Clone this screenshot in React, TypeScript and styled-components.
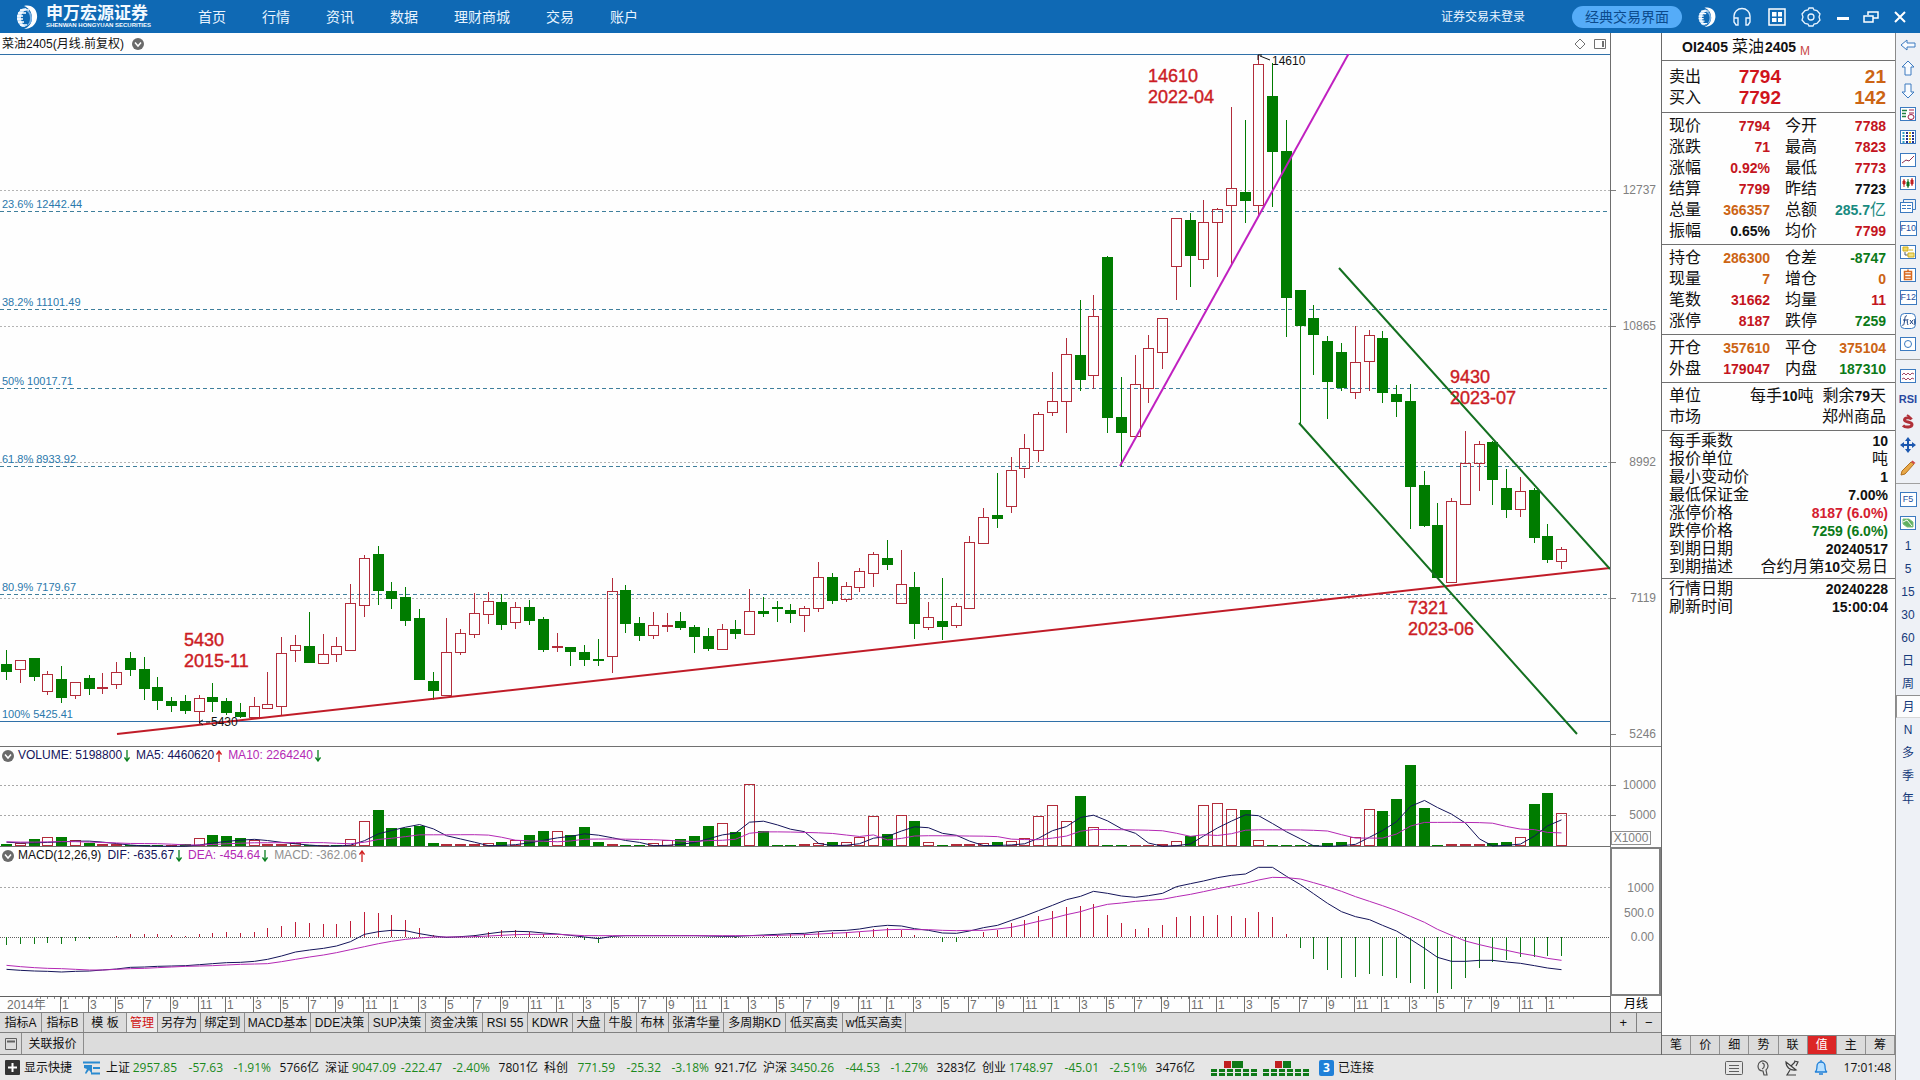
import React from "react";
import styled, { createGlobalStyle } from "styled-components";

/* ---------- tokens ---------- */
const RED = "#c41420";
const CANDLE_RED = "#b22c3a";
const GREEN = "#007c00";
const NAVY = "#14145a";
const PURPLE = "#b428b4";
const FONT = `"Liberation Sans", "Noto Sans CJK SC", sans-serif`;

const Global = createGlobalStyle`
  * { box-sizing: border-box; }
  html, body { margin: 0; padding: 0; }
  body { font-family: ${FONT}; font-size: 12px; color: #111; background: #fefefe; }
  button { font: inherit; color: inherit; background: none; border: 0; padding: 0; margin: 0; cursor: pointer; }
  svg { display: block; }
`;

/* ---------- data ---------- */
type Candle = [up: 0 | 1, top: number, bottom: number, high: number, low: number];
const CANDLES: Candle[] = [
  [0, 664, 671, 650, 679], [1, 660, 669, 660, 682], [0, 658, 676, 658, 680], [1, 674, 691, 671, 694],
  [0, 679, 697, 666, 702], [1, 682, 695, 682, 698], [0, 678, 688, 675, 694], [1, 687, 688, 673, 693],
  [1, 672, 684, 662, 688], [0, 658, 669, 652, 675], [0, 669, 688, 657, 699], [0, 687, 700, 677, 709],
  [0, 701, 705, 697, 711], [0, 701, 710, 695, 713], [1, 698, 711, 695, 723], [0, 697, 701, 683, 711],
  [0, 701, 712, 698, 714], [0, 712, 716, 703, 717], [1, 706, 717, 697, 717], [1, 704, 708, 672, 708],
  [1, 653, 706, 637, 714], [1, 645, 650, 635, 661], [0, 646, 662, 612, 662], [1, 654, 663, 634, 663],
  [1, 646, 654, 637, 661], [1, 603, 650, 584, 650], [1, 558, 605, 555, 616], [0, 554, 590, 546, 604],
  [0, 591, 598, 582, 608], [0, 597, 620, 587, 625], [0, 618, 679, 609, 679], [0, 681, 690, 672, 699],
  [1, 652, 695, 618, 695], [1, 633, 652, 629, 654], [1, 613, 634, 593, 637], [1, 601, 614, 592, 623],
  [0, 602, 624, 594, 629], [1, 607, 622, 602, 628], [0, 607, 620, 600, 624], [0, 619, 649, 617, 651],
  [1, 646, 647, 633, 651], [0, 647, 651, 647, 665], [0, 652, 659, 645, 665], [0, 659, 660, 639, 665],
  [1, 591, 656, 578, 672], [0, 590, 623, 585, 632], [0, 623, 635, 617, 640], [1, 625, 635, 612, 638],
  [1, 625, 626, 613, 631], [0, 621, 627, 612, 629], [0, 627, 636, 625, 652], [0, 636, 648, 628, 650],
  [1, 629, 649, 624, 649], [0, 629, 633, 620, 638], [1, 611, 634, 589, 634], [0, 611, 613, 597, 616],
  [0, 607, 608, 601, 621], [0, 610, 613, 604, 622], [1, 608, 615, 606, 631], [1, 577, 608, 562, 611],
  [0, 577, 600, 573, 603], [1, 586, 599, 582, 601], [1, 571, 587, 568, 591], [1, 554, 573, 552, 586],
  [0, 558, 564, 540, 569], [1, 584, 603, 550, 603], [0, 587, 623, 572, 638], [1, 617, 627, 602, 629],
  [0, 621, 626, 578, 639], [1, 606, 625, 603, 627], [1, 542, 608, 536, 608], [1, 517, 543, 508, 543],
  [0, 515, 518, 473, 527], [1, 470, 506, 457, 512], [1, 448, 468, 434, 477], [1, 414, 450, 412, 461],
  [1, 401, 412, 372, 415], [1, 354, 401, 338, 432], [0, 355, 379, 300, 390], [1, 316, 375, 295, 388],
  [0, 257, 417, 256, 432], [0, 417, 432, 377, 466], [1, 384, 436, 355, 436], [1, 348, 388, 335, 402],
  [1, 318, 352, 318, 368], [1, 218, 266, 218, 299], [0, 220, 255, 213, 286], [1, 222, 259, 200, 268],
  [1, 209, 222, 208, 276], [1, 188, 205, 107, 265], [0, 192, 200, 120, 222], [1, 64, 205, 55, 214],
  [0, 96, 151, 63, 206], [0, 151, 297, 120, 336], [0, 290, 325, 290, 423], [0, 318, 334, 305, 374],
  [0, 341, 381, 336, 418], [0, 352, 387, 343, 390], [1, 362, 392, 326, 398], [1, 335, 361, 330, 390],
  [0, 338, 392, 331, 402], [0, 394, 401, 385, 416], [0, 401, 486, 384, 528], [0, 485, 525, 471, 526],
  [0, 525, 577, 503, 577], [1, 501, 582, 498, 582], [1, 463, 504, 431, 504], [1, 444, 463, 441, 490],
  [0, 442, 479, 441, 504], [0, 488, 509, 469, 517], [1, 491, 509, 477, 516], [0, 490, 537, 488, 542],
  [0, 536, 559, 524, 562], [1, 549, 561, 547, 568],
];

/* bar heights; a negative number is a falling month */
const VOLUMES = [
  -4, 6, -18, 24, -25, 15, -6, 3, 3, -2, -2, -2, 2, -4, 21, -30, -27, -21, 16, 3, 3, 5, -2, 2, -2, 17, 72, -105, -51,
  -52, -57, -6, 3, 3, 3, 5, -8, 16, -30, -42, 41, -30, -55, -9, 3, -1, -1, 6, 14, -18, -28, -57, 65, -40, 182, -43, -1,
  -1, 3, 6, -8, 9, 23, 86, -33, 89, -72, 9, -2, 3, 3, 5, -9, 11, 20, 86, 119, 71, -147, 54, -1, -1, 2, 2, 4, 11, -27,
  119, 125, 107, -105, 14, -1, -1, -1, -1, -6, -9, 23, 107, -102, -138, -240, -111, -1, 3, 3, 3, -6, -9, 23, -123, -156,
  96,
];

const DIF = [
  688, 691, 693, 694, 696, 694, 693, 690, 687, 682, 681, 679, 678, 677, 674, 671, 668, 667, 664, 658, 648, 636, 630, 625,
  618, 605, 583, 575, 571, 572, 581, 588, 592, 590, 587, 581, 576, 574, 575, 579, 582, 586, 591, 596, 589, 587, 587, 587,
  587, 587, 587, 588, 589, 589, 587, 585, 583, 581, 580, 575, 572, 571, 567, 560, 556, 558, 566, 571, 579, 580, 573, 563,
  556, 541, 528, 512, 496, 479, 469, 454, 460, 468, 472, 467, 460, 440, 431, 423, 413, 406, 402, 382, 382, 409, 434, 461,
  490, 515, 530, 539, 556, 573, 598, 625, 652, 664, 664, 661, 661, 666, 670, 677, 684, 689,
];
const DEA = [
  676, 680, 683, 685, 686, 688, 690, 690, 688, 686, 685, 683, 681, 679, 678, 677, 675, 673, 672, 671, 665, 658, 651, 645,
  638, 629, 620, 611, 604, 598, 594, 591, 591, 591, 590, 588, 586, 584, 583, 583, 583, 585, 587, 587, 587, 587, 587, 587,
  587, 587, 587, 587, 587, 587, 587, 587, 586, 585, 584, 582, 580, 578, 575, 572, 569, 568, 569, 569, 571, 572, 571, 571,
  567, 562, 554, 544, 535, 524, 515, 503, 493, 489, 484, 481, 478, 470, 463, 455, 446, 438, 430, 420, 412, 413, 417, 428,
  440, 454, 470, 484, 497, 512, 529, 547, 568, 586, 603, 614, 623, 631, 640, 647, 655, 661,
];

const W = 1610;
const STEP = 13.763;
const cx = (i: number) => Math.round(6 + i * STEP) + 0.5;

const FIBS: [string, number][] = [
  ["23.6% 12442.44", 157], ["38.2% 11101.49", 255], ["50% 10017.71", 334],
  ["61.8% 8933.92", 412], ["80.9% 7179.67", 540], ["100% 5425.41", 667],
];
const PRICE_TICKS: [string, number][] = [["12737", 136], ["10865", 272], ["8992", 408], ["7119", 544], ["5246", 680]];

/* ---------- shell ---------- */
const Page = styled.div`
  height: 100vh; min-height: 700px; display: flex; flex-direction: column; overflow: hidden;
`;
const Header = styled.header`
  flex: none; height: 33px; display: flex; align-items: center; background: #0f69b4; color: #e8f4ff;
`;
const Brand = styled.div`
  width: 198px; padding-left: 16px; display: flex; align-items: center; gap: 8px;
`;
const BrandText = styled.div`
  display: flex; flex-direction: column; color: #f4faff;
  strong { font-size: 17px; line-height: 17px; font-weight: 700; white-space: nowrap; }
  small { font-size: 6px; line-height: 7px; font-weight: 700; white-space: nowrap; }
`;
const Nav = styled.nav`
  flex: 1; display: flex; gap: 36px; font-size: 14px; line-height: 20px;
  a { color: inherit; text-decoration: none; white-space: nowrap; }
`;
const LoginState = styled.span`font-size: 12px; line-height: 20px; margin-right: 47px; white-space: nowrap;`;
const ModeButton = styled.button`
  width: 110px; height: 22px; border-radius: 11px; background: #55acf8; color: #0b4a8c; font-size: 14px; line-height: 20px;
  margin-right: 14px;
`;
const HeaderIcons = styled.div`
  display: flex; align-items: center; padding-right: 10px;
  button { height: 24px; display: flex; align-items: center; justify-content: center; }
`;
const HeadBtn = styled.button<{ $w: number }>`width: ${(p) => p.$w}px;`;

const Body = styled.div`flex: 1; min-height: 0; display: flex;`;
const MainCol = styled.div`flex: 1; min-width: 0; display: flex; flex-direction: column;`;
const Work = styled.div`flex: 1; min-height: 0; display: flex;`;
const Left = styled.main`flex: 1; min-width: 0; display: flex; flex-direction: column;`;

/* ---------- chart ---------- */
const Chart = styled.section`
  flex: 1; min-height: 0; display: grid;
  grid-template-columns: minmax(0, 1fr) 51px;
  grid-template-rows: 21px minmax(0, 692fr) minmax(0, 101fr) minmax(0, 149fr) 17px;
`;
const TitleCell = styled.div`
  display: flex; align-items: center; gap: 8px; padding: 0 4px 0 2px; font-size: 12px; line-height: 20px; white-space: nowrap;
`;
const Spacer = styled.span`flex: 1;`;
const Pane = styled.div<{ $line?: string }>`
  position: relative; overflow: hidden;
  border-top: ${(p) => (p.$line ? `1px solid ${p.$line}` : "0")};
`;
const Plot = styled.svg`position: absolute; inset: 0; width: 100%; height: 100%;`;
const Axis = styled.div<{ $boxed?: boolean; $top?: boolean }>`
  position: relative; color: #808080; border-left: 1px solid #6e6e6e;
  ${(p) => p.$top && "border-top: 1px solid #808080;"}
  ${(p) => p.$boxed && "border: 2px solid #808080;"}
`;
const Tick = styled.span<{ $at: string; $bare?: boolean }>`
  position: absolute; left: 0; right: 5px; top: ${(p) => p.$at}; height: 14px; margin-top: -7px;
  font-size: 12px; line-height: 14px; text-align: right;
  &::before {
    content: ""; position: absolute; left: 0; top: 7px; width: 5px; height: ${(p) => (p.$bare ? 0 : 1)}px; background: #808080;
  }
`;
const Unit = styled.span`
  position: absolute; left: 0; bottom: 2px; width: 40px; height: 14px; border: 1px solid #909090;
  font-size: 12px; line-height: 12px; text-align: center;
`;
const FibLabel = styled.span<{ $y: number }>`
  position: absolute; left: 2px; top: calc(100% * ${(p) => p.$y} / 692); margin-top: -14px;
  font-size: 11px; line-height: 14px; color: #2a78ac;
`;
const Note = styled.div<{ $x: number; $y: number }>`
  position: absolute; left: calc(100% * ${(p) => p.$x} / ${W}); top: calc(100% * ${(p) => p.$y} / 692);
  font-size: 18px; line-height: 21px; color: #cc1c24; white-space: nowrap; -webkit-text-stroke: 0.4px #cc1c24;
`;
const Peak = styled(Note)`font-size: 12px; line-height: 14px; color: #111; -webkit-text-stroke: 0;`;
const Legend = styled.div`
  position: relative; display: flex; align-items: center; gap: 4px; height: 17px; padding-left: 2px;
  font-size: 12px; line-height: 17px; white-space: nowrap;
`;
const Metric = styled.span<{ $c: string }>`
  display: inline-flex; align-items: center; gap: 2px; color: ${(p) => p.$c}; margin-right: 2px;
`;
const Dates = styled.div`
  position: relative; border-top: 1px solid #606060; border-bottom: 1px solid #808080; overflow: hidden; color: #707070;
`;
const Month = styled.span<{ $x: number; $tick?: boolean }>`
  position: absolute; left: calc(100% * ${(p) => p.$x} / ${W}); top: 0; height: 16px; padding-left: 1px;
  border-left: ${(p) => (p.$tick ? "1px solid #707070" : "0")}; font-size: 12px; line-height: 16px; white-space: nowrap;
`;
const Period = styled.div`
  border-left: 1px solid #6e6e6e; border-bottom: 1px solid #808080; text-align: center; line-height: 16px; color: #000;
`;

/* ---------- strips under the chart ---------- */
const Strip = styled.div<{ $h: number }>`
  flex: none; height: ${(p) => p.$h}px; display: flex; background: #dcdcdc; border-bottom: 1px solid #808080;
`;
const StripTab = styled.button<{ $w: number; $hot?: boolean }>`
  width: ${(p) => p.$w}px; border-right: 1px solid #8c8c8c; font-size: 12px; line-height: 18px; white-space: nowrap;
  overflow: hidden; color: ${(p) => (p.$hot ? "#d01010" : "#111")}; background: ${(p) => (p.$hot ? "#ececec" : "none")};
  display: flex; align-items: center; justify-content: center;
`;
const Zoomers = styled.div`
  margin-left: auto; width: 51px; display: flex; border-left: 1px solid #6e6e6e;
  button { flex: 1; font-size: 13px; line-height: 18px; }
  button + button { border-left: 1px solid #808080; }
`;

/* ---------- quote panel ---------- */
const Quote = styled.aside`
  flex: none; width: 234px; border-left: 1px solid #6a6a6a; display: flex; flex-direction: column; background: #fefefe;
`;
const QuoteTitle = styled.h1`
  margin: 0; height: 27px; padding-left: 20px; display: flex; align-items: center; font-size: 16px; line-height: 24px;
  font-weight: 400; white-space: nowrap;
  b { font-size: 14px; margin-right: 4px; }
  span + b { margin-left: 1px; }
  sub { font-size: 12px; color: #c84848; line-height: 12px; padding-top: 8px; vertical-align: baseline; }
`;
const Block = styled.table<{ $big?: boolean; $row?: number }>`
  width: 100%; border-collapse: separate; border-spacing: 0; table-layout: fixed; border-top: 1px solid #707070;
  padding: ${(p) => (p.$big ? "5px" : p.$row ? "1px" : "2px")} ${(p) => (p.$row ? 7 : 9)}px
    ${(p) => (p.$big ? 4 : p.$row ? 2 : 3)}px 7px;
  th, td {
    padding: 0; height: ${(p) => p.$row || 21}px; line-height: ${(p) => (p.$row || 21) - 2}px; font-weight: 400;
    text-align: left; font-size: 16px; white-space: nowrap; vertical-align: middle;
  }
`;
const Val = styled.td<{ $c?: string; $big?: boolean }>`
  color: ${(p) => p.$c || "#111"};
  && { text-align: right; }
  b { font-size: ${(p) => (p.$big ? 19 : 14)}px; line-height: 1; }
`;
const Second = styled.th`&& { padding-left: 15px; }`;
const QuoteTabs = styled.div`
  margin-top: auto; height: 20px; display: flex; border-top: 1px solid #808080; border-bottom: 1px solid #808080; background: #dcdcdc;
`;
const QuoteTab = styled.button<{ $on?: boolean }>`
  flex: 1; font-size: 12px; line-height: 17px; border-right: 1px solid #909090;
  background: ${(p) => (p.$on ? "#dc2626" : "none")}; color: ${(p) => (p.$on ? "#fff" : "#111")};
`;

/* ---------- tool rail ---------- */
const Rail = styled.nav`
  flex: none; width: 25px; background: #eef1f6; border-left: 1px solid #8a8a8a; display: flex; flex-direction: column;
`;
const RailBtn = styled.button<{ $on?: boolean; $color?: string }>`
  height: 23px; font-size: 12px; line-height: 20px; color: ${(p) => p.$color || "#163a7a"};
  display: flex; align-items: center; justify-content: center; flex: none;
  ${(p) => p.$on && "background: #fdfdfd; border: 1px solid #909090; border-right: 0; border-bottom-color: #d8d8d8;"}
  b { font-size: 11px; }
`;
const RailRule = styled.hr`width: 100%; height: 9px; margin: 0; border: 0; flex: none;
  background: linear-gradient(#a0a0a0, #a0a0a0) center / 100% 1px no-repeat;`;
const KeyBox = styled.span`
  width: 17px; height: 15px; border: 1px solid #3c7ac0; font-size: 9px; line-height: 13px; text-align: center;
  color: #1c50a0; background: #fff;
`;

/* ---------- status bar ---------- */
const Status = styled.footer`
  flex: none; height: 25px; display: flex; align-items: center; background: #e6e6e6; padding: 0 4px 0 5px;
  font-family: "Open Sans", "Noto Sans CJK SC", sans-serif; font-size: 12px; line-height: 18px; white-space: nowrap;
`;
const Quick = styled.button`display: flex; align-items: center; gap: 4px; width: 78px;`;
const ListBtn = styled.button`width: 23px;`;
const Index = styled.div`
  width: 219px; display: grid; grid-template-columns: 26px 45px 46px 48px 48px; text-align: right;
  span:first-child { text-align: left; }
`;
const Down = styled.span`color: #1c8a1c;`;
const Heat = styled.svg`flex: none; margin-left: 9px;`;
const Link = styled.div`display: flex; align-items: center; gap: 4px; margin-left: 9px;`;
const Badge = styled.b`width: 15px; height: 16px; background: #2080d8; color: #fff; line-height: 16px; text-align: center; border-radius: 2px;`;
const Tray = styled.div`
  margin-left: auto; display: flex; align-items: center;
  button { width: 29px; display: flex; justify-content: center; }
  time { margin-left: 8px; }
`;

/* ---------- small drawings ---------- */
const Swirl = ({ w, h }: { w: number; h: number }) => (
  <svg width={w} height={h} viewBox="0 0 22 24">
    <path d="M8 1c8-2 14 4 13 12-1 7-6 11-13 11 5-2 8-6 8-11 0-6-3-10-8-12z" fill="#fff" />
    <path d="M10 3C4 3 1 8 1 13c0 4 2 7 5 9h4c-3-2-5-5-5-9s2-7 6-8z" fill="#c8e2fa" />
    <path d="M4 5h9M2 8h8M1 11h6M1 14h6M2 17h6M4 20h7" stroke="#fff" strokeWidth="1.400" />
    <path d="M9 5c5 0 7 4 7 8s-2 7-6 8c3-2 4-5 4-8s-1-6-5-8z" fill="#7db4e6" />
  </svg>
);
const Chevron = () => (
  <svg width="12" height="12" viewBox="0 0 12 12">
    <circle cx="6" cy="6" r="6" fill="#6a6a6a" />
    <path d="M3 4.5l3 3.5 3-3.5" fill="none" stroke="#fff" strokeWidth="1.5" />
  </svg>
);
const Arrow = ({ up }: { up?: boolean }) => (
  <svg width="6" height="12" viewBox="0 0 6 12">
    {up ? (
      <path d="M3 12V2M.5 4.500L3 1l2.500 3.500" fill="none" stroke="#d02020" strokeWidth="1.300" />
    ) : (
      <path d="M3 0v10M.5 7.500L3 11l2.500-3.500" fill="none" stroke="#0a8020" strokeWidth="1.300" />
    )}
  </svg>
);

const S = "#3c7ac0";
const Ico = ({ children }: { children: React.ReactNode }) => (
  <svg width="16" height="16" viewBox="0 0 16 16" fill="none" stroke={S} strokeWidth="1">{children}</svg>
);
const Frame = () => <rect x=".5" y="1.5" width="15" height="13" fill="#fff" />;

const RAIL_ICONS: [string, React.ReactNode][] = [
  ["后退", <Ico><path d="M1 8l6-5v3h8v4H7v3z" fill="#f8fbff" /></Ico>],
  ["上移", <Ico><path d="M8 1l6 6h-3v8H5V7H2z" fill="#f8fbff" /></Ico>],
  ["下移", <Ico><path d="M8 15l6-6h-3V1H5v8H2z" fill="#f8fbff" /></Ico>],
  ["资讯", <Ico><Frame /><path d="M2 4.500h5M2 7.500h4M2 10.500h4" stroke="#208040" strokeWidth="1.500" /><path d="M9 4h5M9 7h5M8 11a3 2.500 0 1 0 6 0 3 2.500 0 1 0-6 0" stroke="#a02048" /></Ico>],
  ["列表", <Ico><Frame /><path d="M3.500 3v11" stroke="#30a0c0" strokeWidth="2" strokeDasharray="2 1" /><path d="M7 3v11" stroke="#203090" strokeWidth="2" strokeDasharray="2 1" /><path d="M10 3v11" stroke="#d0b020" strokeWidth="2" strokeDasharray="2 1" /><path d="M13 3v11" stroke="#203090" strokeWidth="2" strokeDasharray="2 1" /></Ico>],
  ["分时", <Ico><Frame /><path d="M2 11l4-3 3 1 5-5" stroke="#903050" /></Ico>],
  ["K线", <Ico><Frame /><path d="M4 4v8M12 3v8" stroke="#c02020" /><path d="M8 4v9" stroke="#107020" /><path d="M3 6h2v3H3zM11 5h2v4h-2z" fill="#c02020" stroke="#c02020" /><path d="M7 7h2v4H7z" fill="#107020" stroke="#107020" /></Ico>],
  ["报表", <Ico><path d="M3.500 4V1.500h12v10H13" /><rect x=".5" y="4.500" width="12" height="10" fill="#fff" /><path d="M2 7.500h4M7 7.500h4M2 10.500h4M7 10.500h4" /></Ico>],
  ["F10", <KeyBox>F10</KeyBox>],
  ["板块", <Ico><Frame /><path d="M3 3h5v4H3z" fill="#f0d860" stroke="#d0b020" /><path d="M5 8v3h3" stroke="#506070" /><path d="M9 6h4M8 9h6v4H8z" fill="#f0e080" stroke="#d0b020" /></Ico>],
  ["自选", <Ico><Frame /><path d="M4.500 4.500h7v8h-7zM5 7h6M5 10h6M8 2.500v2" stroke="#d86820" strokeWidth="1.500" /></Ico>],
  ["F12", <KeyBox>F12</KeyBox>],
  ["公式", <Ico><rect x=".5" y=".5" width="15" height="15" rx="4" fill="#fff" /><path d="M7 3c-2-1-2 2-2.500 5S4 13 2 12M3 7h4M8 6c-1 2-1 4 0 6M10 7l3 4M13 7l-3 4M14 6c1 2 1 4 0 6" stroke="#1c4080" /></Ico>],
  ["圆形", <Ico><Frame /><circle cx="8" cy="8" r="3.500" /></Ico>],
];
const RAIL_TOOLS: [string, React.ReactNode][] = [
  ["叠加", <Ico><Frame /><path d="M2 7l2-2 2 2 2-2 2 2 2-2 2 1M2 11l2-1 2 2 2-2 2 2 2-2 2 1" stroke="#a04868" /></Ico>],
  ["RSI", <b>RSI</b>],
  ["资金", <Ico><path d="M11.500 5.500C10 3 4.500 3.500 4.500 6c0 2.500 7.500 1.500 7.500 4.500s-6.500 3.500-9 1" stroke="#b03038" strokeWidth="3" /><path d="M7 1l3 2" stroke="#b03038" strokeWidth="2" /></Ico>],
  ["移动", <Ico><path d="M8 0l3 4H9v3h3V5l4 3-4 3V9H9v3h2l-3 4-3-4h2V9H4v2L0 8l4-3v2h3V4H5z" fill="#1c58b0" stroke="none" /></Ico>],
  ["画线", <Ico><path d="M1 15l1-4L11 2l3 2-9 10z" fill="#e8a848" stroke="#b07020" /><path d="M11 2l1.500-1.500L15.500 3 14 4z" fill="#d04848" stroke="none" /></Ico>],
];
const PERIODS = ["1", "5", "15", "30", "60", "日", "周", "月", "N", "多", "季", "年"];

/* ---------- plots ---------- */
const PricePlot = () => (
  <Plot viewBox={`0 54 ${W} 692`} preserveAspectRatio="none" aria-hidden="true">
    <g shapeRendering="crispEdges">
      {[190, 326, 462, 598].map((y) => (
        <line key={y} x1="0" x2={W} y1={y + 0.5} y2={y + 0.5} stroke="#b4b4b4" strokeDasharray="2 2" />
      ))}
      {[211, 309, 388, 466, 594].map((y) => (
        <line key={y} x1="0" x2={W} y1={y + 0.5} y2={y + 0.5} stroke="#3f7f9c" strokeDasharray="4 3" />
      ))}
      <path d={`M0 54.500H${W}M0 721.500H${W}`} stroke="#3070a8" />
      {CANDLES.map(([up, t, b, hi, lo], i) => {
        const x = cx(i);
        const c = up ? CANDLE_RED : GREEN;
        return (
          <g key={i} stroke={c}>
            <path d={`M${x} ${hi}V${t}M${x} ${b}V${lo + 1}`} />
            {up ? (
              <rect x={x - 5} y={t + 0.5} width="10" height={Math.max(b - t, 1)} fill="none" />
            ) : (
              <rect x={x - 5.5} y={t} width="11" height={Math.max(b - t, 1) + 1} fill={c} stroke="none" />
            )}
          </g>
        );
      })}
    </g>
    <path d={`M117 734L${W} 568`} stroke="#c01c28" strokeWidth="2" />
    <path d="M1120 466L1349 53" stroke="#c020c0" strokeWidth="2" />
    <path d={`M1339 268L${W} 569M1299 423L1577 734`} stroke="#147020" strokeWidth="2" />
    <path d="M1258 60v-5h4M1260 56l10 4" stroke="#111" fill="none" />
    <path d="M203 720l-4 2 4 3M206 722h4" stroke="#111" fill="none" />
  </Plot>
);

const average = (n: number) => {
  const v = VOLUMES.map(Math.abs);
  const lead = 17;
  return v
    .map((_, i) => {
      let sum = 0;
      for (let k = 0; k < n; k++) sum += i - k >= 0 ? v[i - k] : lead;
      return `${cx(i)},${(300 - sum / n) / 3}`;
    })
    .join(" ");
};

const VolumePlot = () => (
  <Plot viewBox={`0 0 ${W} 100`} preserveAspectRatio="none" aria-hidden="true">
    <g shapeRendering="crispEdges">
      <path d={`M0 38.500H${W}M0 68.500H${W}`} stroke="#a8a8a8" strokeDasharray="2 2" />
      <path d={`M0 99.500H${W}`} stroke="#707070" />
      {VOLUMES.map((v, i) => {
        const x = cx(i);
        const h = Math.max(Math.round(Math.abs(v) / 3), 1) + (Math.abs(v) > 2 ? 1 : 0);
        if (v < 0) return <rect key={i} x={x - 5.5} y={99 - h} width="11" height={h} fill={GREEN} />;
        if (h < 3) return <rect key={i} x={x - 5.5} y={99 - h} width="11" height={h} fill={CANDLE_RED} />;
        return <rect key={i} x={x - 5} y={99.5 - h} width="10" height={h - 1} fill="none" stroke={CANDLE_RED} />;
      })}
    </g>
    <polyline points={average(5)} fill="none" stroke={NAVY} />
    <polyline points={average(10)} fill="none" stroke={PURPLE} />
  </Plot>
);

const curve = (a: number[]) => a.map((v, i) => `${cx(i)},${(v - 321) / 3}`).join(" ");
const MacdPlot = () => (
  <Plot viewBox={`0 0 ${W} 149`} preserveAspectRatio="none" aria-hidden="true">
    <g shapeRendering="crispEdges">
      <path d={`M0 40.500H${W}`} stroke="#a8a8a8" strokeDasharray="2 2" />
      <path d={`M0 90.500H${W}`} stroke="#606060" strokeDasharray="1 1" />
      {DIF.map((d, i) => {
        const h = ((DEA[i] - d) * 2) / 3;
        return <path key={i} d={`M${cx(i)} 90V${90 - h}`} stroke={h > 0 ? "#c01c38" : "#107a18"} />;
      })}
    </g>
    <polyline points={curve(DIF)} fill="none" stroke={NAVY} />
    <polyline points={curve(DEA)} fill="none" stroke={PURPLE} />
  </Plot>
);

const MONTHS = Array.from({ length: 55 }, (_, k) => ({ x: Math.round(5 + (4 + k * 2) * STEP), m: [1, 3, 5, 7, 9, 11][k % 6] }));
const MINOR = Array.from({ length: 220 }, (_, k) => `M${40 + k * 7}.5 0v2`).join("");

/* ---------- quote data ---------- */
const O = "#cc6414";
const K = "#111";
const G = "#0c7a18";
type Row = [string, string, string, string, string, string];
const BLOCKS: Row[][] = [
  [
    ["现价", "7794", RED, "今开", "7788", RED], ["涨跌", "71", RED, "最高", "7823", RED],
    ["涨幅", "0.92%", RED, "最低", "7773", RED], ["结算", "7799", RED, "昨结", "7723", K],
    ["总量", "366357", O, "总额", "285.7亿", "#188a80"], ["振幅", "0.65%", K, "均价", "7799", RED],
  ],
  [
    ["持仓", "286300", O, "仓差", "-8747", G], ["现量", "7", O, "增仓", "0", O],
    ["笔数", "31662", RED, "均量", "11", RED], ["涨停", "8187", RED, "跌停", "7259", G],
  ],
  [["开仓", "357610", O, "平仓", "375104", O], ["外盘", "179047", RED, "内盘", "187310", G]],
];
const DETAILS: [string, string, string?][] = [
  ["每手乘数", "10"], ["报价单位", "吨"], ["最小变动价", "1"], ["最低保证金", "7.00%"],
  ["涨停价格", "8187 (6.0%)", "#d42030"], ["跌停价格", "7259 (6.0%)", G], ["到期日期", "20240517"], ["到期描述", "合约月第10交易日"],
];
const STAMPS: [string, string][] = [["行情日期", "20240228"], ["刷新时间", "15:00:04"]];

/* digits are bold, Chinese characters are not */
const Mixed = ({ t }: { t: string }) => (
  <>{t.split(/([\d.:%()\- ]+)/).filter(Boolean).map((s, i) => (/[\d]/.test(s) ? <b key={i}>{s}</b> : <span key={i}>{s}</span>))}</>
);
const Cols = ({ widths }: { widths: number[] }) => (
  <colgroup>{widths.map((w, i) => <col key={i} width={w} />)}<col /></colgroup>
);

const TABS: [string, number][] = [
  ["指标A", 42], ["指标B", 42], ["模 板", 43], ["管理", 31], ["另存为", 43], ["绑定到", 44], ["MACD基本", 66], ["DDE决策", 58],
  ["SUP决策", 57], ["资金决策", 57], ["RSI 55", 45], ["KDWR", 45], ["大盘", 32], ["牛股", 32], ["布林", 32], ["张清华量", 55],
  ["多周期KD", 62], ["低买高卖", 57], ["w低买高卖", 63],
];
const INDEXES = [
  ["上证", "2957.85", "-57.63", "-1.91%", "5766亿"], ["深证", "9047.09", "-222.47", "-2.40%", "7801亿"],
  ["科创", "771.59", "-25.32", "-3.18%", "921.7亿"], ["沪深", "3450.26", "-44.53", "-1.27%", "3283亿"],
  ["创业", "1748.97", "-45.01", "-2.51%", "3476亿"],
];

export default function App() {
  return (
    <Page>
      <Global />
      <Header>
        <Brand>
          <Swirl w={22} h={24} />
          <BrandText><strong>申万宏源证券</strong><small>SHENWAN HONGYUAN SECURITIES</small></BrandText>
        </Brand>
        <Nav>
          {["首页", "行情", "资讯", "数据", "理财商城", "交易", "账户"].map((t) => <a key={t} href="#">{t}</a>)}
        </Nav>
        <LoginState>证券交易未登录</LoginState>
        <ModeButton>经典交易界面</ModeButton>
        <HeaderIcons>
          <HeadBtn $w={22} aria-label="申万宏源"><Swirl w={20} h={20} /></HeadBtn>
          <HeadBtn $w={48} aria-label="客服">
            <svg width="20" height="20" viewBox="0 0 20 20" fill="none" stroke="#e8f4ff" strokeWidth="1.400"><path d="M2 15V9a8 7.500 0 0 1 16 0v6M2 11h4v7H4l-2-3zM18 11h-4v7h2l2-3z" /></svg>
          </HeadBtn>
          <HeadBtn $w={22} aria-label="应用">
            <svg width="18" height="18" viewBox="0 0 18 18"><rect x="1" y="1" width="16" height="16" fill="none" stroke="#fff" strokeWidth="1.500" /><path d="M4 4h4.500v4.500H4zM10 4h4v4.500h-4zM4 10h4.500v4H4zM10 10h4v4h-4z" fill="#fff" /></svg>
          </HeadBtn>
          <HeadBtn $w={46} aria-label="设置">
            <svg width="20" height="20" viewBox="0 0 20 20" fill="none" stroke="#e8f4ff" strokeWidth="1.300"><path d="M7 3l1-2h4l1 2 3 .5 3 3.500-1 3 1 3-3 3.500-3 .5-1 2H8l-1-2-3-.5L1 13l1-3-1-3 3-3.500z" /><circle cx="10" cy="10" r="3" /></svg>
          </HeadBtn>
          <HeadBtn $w={18} aria-label="最小化">
            <svg width="14" height="14" viewBox="0 0 14 14"><path d="M1 8.500h12" stroke="#fff" strokeWidth="3" /></svg>
          </HeadBtn>
          <HeadBtn $w={38} aria-label="还原">
            <svg width="16" height="14" viewBox="0 0 16 14" fill="none" stroke="#fff" strokeWidth="1.500"><path d="M5 5V2h10v6h-5" /><rect x="1" y="6" width="9" height="6" /></svg>
          </HeadBtn>
          <HeadBtn $w={20} aria-label="关闭">
            <svg width="14" height="14" viewBox="0 0 14 14"><path d="M2 2l10 10M12 2L2 12" stroke="#fff" strokeWidth="2" /></svg>
          </HeadBtn>
        </HeaderIcons>
      </Header>

      <Body>
        <MainCol>
          <Work>
            <Left>
              <Chart>
                <TitleCell>
                  <span>菜油2405(月线.前复权)</span><Chevron /><Spacer />
                  <svg width="12" height="12" viewBox="0 0 12 12"><path d="M6 1l5 5-5 5-5-5z" fill="none" stroke="#707070" /></svg>
                  <svg width="12" height="12" viewBox="0 0 12 12"><path d="M.5 1.500h11v9H.5z" fill="none" stroke="#707070" /><path d="M8 3h2v6H8z" fill="#707070" /></svg>
                </TitleCell>
                <Axis />
                <Pane>
                  <PricePlot />
                  {FIBS.map(([t, y]) => <FibLabel key={t} $y={y}>{t}</FibLabel>)}
                  <Note $x={184} $y={576}>5430<br />2015-11</Note>
                  <Note $x={1148} $y={12}>14610<br />2022-04</Note>
                  <Note $x={1450} $y={313}>9430<br />2023-07</Note>
                  <Note $x={1408} $y={544}>7321<br />2023-06</Note>
                  <Peak $x={1272} $y={0}>14610</Peak>
                  <Peak $x={211} $y={661}>5430</Peak>
                </Pane>
                <Axis>{PRICE_TICKS.map(([t, y]) => <Tick key={t} $at={`calc(100% * ${y} / 692)`}>{t}</Tick>)}</Axis>
                <Pane $line="#707070">
                  <VolumePlot />
                  <Legend>
                    <Chevron />
                    <Metric $c={NAVY}>VOLUME: 5198800<Arrow /></Metric>
                    <Metric $c={NAVY}>MA5: 4460620<Arrow up /></Metric>
                    <Metric $c={PURPLE}>MA10: 2264240<Arrow /></Metric>
                  </Legend>
                </Pane>
                <Axis $top>
                  <Tick $at="38%">10000</Tick><Tick $at="68%">5000</Tick><Unit>X1000</Unit>
                </Axis>
                <Pane>
                  <MacdPlot />
                  <Legend>
                    <Chevron />
                    <Metric $c="#111">MACD(12,26,9)</Metric>
                    <Metric $c={NAVY}>DIF: -635.67<Arrow /></Metric>
                    <Metric $c={PURPLE}>DEA: -454.64<Arrow /></Metric>
                    <Metric $c="#909090">MACD: -362.06<Arrow up /></Metric>
                  </Legend>
                </Pane>
                <Axis $boxed>
                  <Tick $at="27%" $bare>1000</Tick><Tick $at="44%" $bare>500.0</Tick><Tick $at="61%" $bare>0.00</Tick>
                </Axis>
                <Dates>
                  <Plot viewBox={`0 0 ${W} 16`} preserveAspectRatio="none"><path d={MINOR} stroke="#808080" /></Plot>
                  <Month $x={6}>2014年</Month>
                  {MONTHS.map(({ x, m }) => <Month key={x} $x={x} $tick>{m}</Month>)}
                </Dates>
                <Period>月线</Period>
              </Chart>
              <Strip $h={20}>
                {TABS.map(([t, w]) => <StripTab key={t} $w={w} $hot={t === "管理"}>{t}</StripTab>)}
                <Zoomers><button>+</button><button>−</button></Zoomers>
              </Strip>
              <Strip $h={22}>
                <StripTab $w={22} aria-label="展开">
                  <svg width="12" height="12" viewBox="0 0 12 12"><path d="M.5 .5h11v11H.5z" fill="none" stroke="#606060" /><path d="M2 3.500h8" stroke="#606060" strokeWidth="2" /></svg>
                </StripTab>
                <StripTab $w={62}>关联报价</StripTab>
              </Strip>
            </Left>

            <Quote>
              <QuoteTitle><b>OI2405</b><span>菜油</span><b>2405</b><sub>M</sub></QuoteTitle>
              <Block $big>
                <Cols widths={[40, 72]} />
                <tbody>
                  <tr><th scope="row">卖出</th><Val $c="#d0141c" $big><b>7794</b></Val><Val $c={O} $big><b>21</b></Val></tr>
                  <tr><th scope="row">买入</th><Val $c="#d0141c" $big><b>7792</b></Val><Val $c={O} $big><b>142</b></Val></tr>
                </tbody>
              </Block>
              {BLOCKS.map((rows, i) => (
                <Block key={i}>
                  <Cols widths={[40, 61, 50]} />
                  <tbody>
                    {rows.map((r) => (
                      <tr key={r[0]}>
                        <th scope="row">{r[0]}</th><Val $c={r[2]}><Mixed t={r[1]} /></Val>
                        <Second scope="row">{r[3]}</Second><Val $c={r[5]}><Mixed t={r[4]} /></Val>
                      </tr>
                    ))}
                  </tbody>
                </Block>
              ))}
              <Block>
                <Cols widths={[60]} />
                <tbody>
                  <tr><th scope="row">单位</th><Val>每手<b>10</b>吨&nbsp; 剩余<b>79</b>天</Val></tr>
                  <tr><th scope="row">市场</th><Val>郑州商品</Val></tr>
                </tbody>
              </Block>
              <Block $row={18}>
                <Cols widths={[84]} />
                <tbody>{DETAILS.map(([k, v, c]) => <tr key={k}><th scope="row">{k}</th><Val $c={c}><Mixed t={v} /></Val></tr>)}</tbody>
              </Block>
              <Block $row={18}>
                <Cols widths={[84]} />
                <tbody>{STAMPS.map(([k, v]) => <tr key={k}><th scope="row">{k}</th><Val><Mixed t={v} /></Val></tr>)}</tbody>
              </Block>
              <QuoteTabs>
                {["笔", "价", "细", "势", "联", "值", "主", "筹"].map((t) => <QuoteTab key={t} $on={t === "值"}>{t}</QuoteTab>)}
              </QuoteTabs>
            </Quote>
          </Work>

          <Status>
            <Quick>
              <svg width="15" height="15" viewBox="0 0 15 15"><rect width="15" height="15" rx="1" fill="#333" /><path d="M7.500 3v9M3 7.500h9" stroke="#fff" strokeWidth="2" /></svg>
              显示快捷
            </Quick>
            <ListBtn aria-label="指数列表">
              <svg width="17" height="14" viewBox="0 0 17 14"><path d="M0 1.500h17M10 7h7M8 12.500h9" stroke="#2a8ad0" strokeWidth="2" /><path d="M1 4h8v9l-3-4-3 4-1-1 2-4-3-1z" fill="#2a8ad0" /></svg>
            </ListBtn>
            {INDEXES.map(([n, p, c, r, v]) => (
              <Index key={n}><span>{n}</span><Down>{p}</Down><Down>{c}</Down><Down>{r}</Down><span>{v}</span></Index>
            ))}
            <Heat width="100" height="18" viewBox="0 0 100 18" aria-hidden="true">
              <path d="M1 11.500h46M1 15.500h46M53 11.500h46M53 15.500h46" stroke="#107a18" strokeWidth="3" strokeDasharray="6 2" />
              <path d="M14 2h7v7h-7zM65 2h7v7h-7z" fill="#c02020" /><path d="M22 2h11v7H22zM73 2h8v7h-8z" fill="#107a18" />
            </Heat>
            <Link><Badge>3</Badge>已连接</Link>
            <Tray>
              <button aria-label="日志"><svg width="18" height="16" viewBox="0 0 18 16" fill="none" stroke="#606060"><rect x=".5" y="1.500" width="17" height="13" rx="1" /><path d="M4 5.500h10M4 8.500h10M4 11.500h10" /></svg></button>
              <button aria-label="客服"><svg width="14" height="16" viewBox="0 0 14 16" fill="none" stroke="#505050" strokeWidth="1.200"><path d="M2 6a5 5 0 1 1 8 4l1 5H8l-1-4c-3 0-5-2-5-5z" /><path d="M6 3c3 0 3 5 0 6" /></svg></button>
              <button aria-label="信号"><svg width="16" height="16" viewBox="0 0 16 16" fill="none" stroke="#404040" strokeWidth="1.200"><path d="M2 2c0 5 4 9 10 8zM7 6l4-4M10 1l4 1-2 4M6 10l-3 5h9" /></svg></button>
              <button aria-label="提醒"><svg width="14" height="16" viewBox="0 0 14 16" fill="#b8e0ff" stroke="#2080d8" strokeWidth="1.300"><path d="M1 12c2-1 2-3 2-6a4 4 0 0 1 8 0c0 3 0 5 2 6zM5 14h4M7 0v2" /></svg></button>
              <time>17:01:48</time>
            </Tray>
          </Status>
        </MainCol>

        <Rail>
          {RAIL_ICONS.map(([n, icon]) => <RailBtn key={n} aria-label={n}>{icon}</RailBtn>)}
          <RailRule />
          {RAIL_TOOLS.map(([n, icon]) => <RailBtn key={n} aria-label={n} $color="#2848a0">{icon}</RailBtn>)}
          <RailRule />
          <RailBtn aria-label="F5"><KeyBox>F5</KeyBox></RailBtn>
          <RailBtn aria-label="刷新"><Ico><Frame /><path d="M3 4h6l4 3v5H7L3 9z" fill="#60b060" stroke="#80c080" /><path d="M3 7l4-2 5 6" stroke="#fff" /></Ico></RailBtn>
          {PERIODS.map((p) => <RailBtn key={p} $on={p === "月"}>{p}</RailBtn>)}
        </Rail>
      </Body>
    </Page>
  );
}
